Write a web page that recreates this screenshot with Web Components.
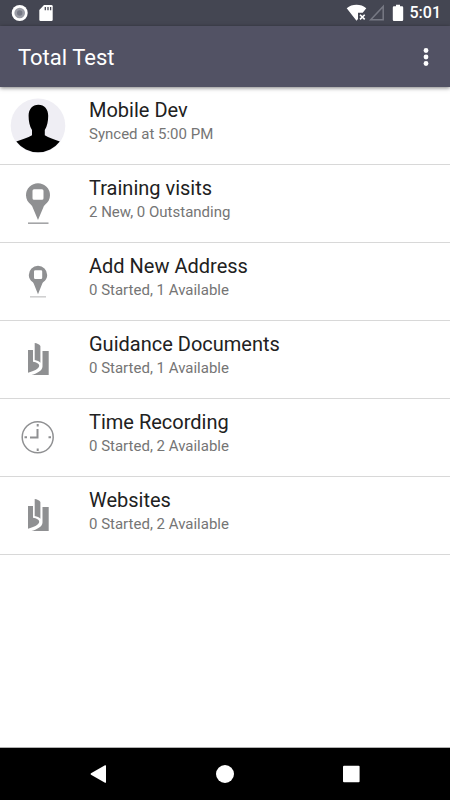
<!DOCTYPE html>
<html lang="en">
<head>
<meta charset="utf-8">
<meta name="viewport" content="width=device-width, initial-scale=1">
<title>Total Test</title>
<style>
    body {
        margin: 0;
        background: #fff;
        font-family: Roboto, sans-serif;
    }
</style>
</head>
<body>
<app-screen>
    <status-bar slot="top" time="5:01"></status-bar>
    <app-bar slot="top" titulo="Total Test"></app-bar>
    <menu-row titulo="Mobile Dev" detail="Synced at 5:00 PM" icon="avatar"></menu-row>
    <menu-row titulo="Training visits" detail="2 New, 0 Outstanding" icon="pin"></menu-row>
    <menu-row titulo="Add New Address" detail="0 Started, 1 Available" icon="smallPin"></menu-row>
    <menu-row titulo="Guidance Documents" detail="0 Started, 1 Available" icon="book"></menu-row>
    <menu-row titulo="Time Recording" detail="0 Started, 2 Available" icon="clock"></menu-row>
    <menu-row titulo="Websites" detail="0 Started, 2 Available" icon="book"></menu-row>
    <nav-bar slot="bottom"></nav-bar>
</app-screen>

<script>
const icons = {
    avatar: `
        <circle cx="38" cy="38.7" r="27.3" fill="#efeef4"/>
        <path fill="#000" d="M38.4 17.7c-6 0-9.800 4.600-9.800 11 0 5.500 1 10.300 3.400 14.300v5.300c-4 2.500-10 4-15.700 6.200a27.300 27.300 0 0 0 43.500 0c-5.500-2.200-11.200-3.800-15-6.200V43c2.400-4 3.400-8.800 3.400-14.300 0-6.400-3.800-11-9.800-11z"/>`,
    pin: `
        <path fill="#8f9092" fill-rule="evenodd" d="M38 18.300a12 12 0 0 1 12 12c0 4-2 7.200-5 9.400-1 1-1.200 1.500-1.600 2.500L38 55l-5.400-12.800c-.4-1-.6-1.500-1.600-2.500-3-2.200-5-5.400-5-9.400a12 12 0 0 1 12-12zM34 24.300q-1.500 0-1.500 1.500v7.400q0 1.500 1.500 1.500h8q1.500 0 1.500-1.500v-7.400q0-1.500-1.500-1.500z"/>
        <path stroke="#a4a5a7" stroke-width="1.600" d="M28 58.200h20.500"/>`,
    smallPin: `
        <path fill="#8f9092" fill-rule="evenodd" d="M38 22.700a9.200 9.200 0 0 1 9.200 9.200c0 3-1.500 5.500-3.800 7.200-.8.700-1 1.200-1.300 2L38 51.300l-4.100-10.200c-.3-.8-.5-1.300-1.300-2-2.300-1.700-3.800-4.200-3.800-7.200a9.200 9.200 0 0 1 9.200-9.200zM35.200 27.300q-1.200 0-1.200 1.200v6.200q0 1.200 1.200 1.200h5.800q1.200 0 1.200-1.200v-6.200q0-1.200-1.200-1.200z"/>
        <path stroke="#d0d0d1" stroke-width="1.600" d="M30 53.800h16"/>`,
    book: `
        <path fill="#8f9092" d="M28 29h5v11.700c3.600.6 6.200 1.900 6.200 4.100 0 3-5 5.300-11.200 6.900z"/>
        <path fill="#8f9092" d="M34.700 22c2.200.2 4.700 1.200 5.700 3v16.700c-1.200-1.300-3.200-2.200-5.700-2.700z"/>
        <path fill="#8f9092" d="M42.500 30h6.200v24H31.500c5-1.400 11-4.200 11-8.500z"/>`,
    clock: `
        <circle cx="37.700" cy="38.300" r="15.500" fill="none" stroke="#8f9092" stroke-width="1.500"/>
        <path fill="none" stroke="#8f9092" stroke-width="2" d="M37.500 30v8.500H30"/>
        <path stroke="#8f9092" stroke-width="2" d="M37.700 25v2.500M37.700 49.500V52M24.500 38.300H27M48.500 38.300H51"/>`
}

class AppScreen extends HTMLElement {
    constructor() {
        super()
        this.attachShadow({ mode: "open" })
    }

    connectedCallback() {
        this.shadowRoot.innerHTML = `
            <style>
                :host {
                    display: flex;
                    flex-direction: column;
                    min-height: 100vh;
                }
                main {
                    flex: 1;
                    border-bottom: 1px solid #b0b0b0;
                }
            </style>
            <slot name="top"></slot>
            <main><slot></slot></main>
            <slot name="bottom"></slot>
        `
    }
}

class StatusBar extends HTMLElement {
    constructor() {
        super()
        this.attachShadow({ mode: "open" })
    }

    connectedCallback() {
        this.shadowRoot.innerHTML = `
            <style>
                :host {
                    display: flex;
                    align-items: center;
                    justify-content: space-between;
                    height: 26px;
                    padding: 0 9px 0 11px;
                    background: #444652;
                    color: #fff;
                    font-size: 16px;
                    font-weight: 500;
                    line-height: 28px;
                }
                div {
                    display: flex;
                    align-items: center;
                }
                svg {
                    display: block;
                }
                .right {
                    gap: 6px;
                }
            </style>
            <div>
                <svg width="44" height="26" viewBox="0 0 44 26">
                    <circle cx="8.700" cy="13" r="8" fill="#fff"/>
                    <circle cx="8.700" cy="13" r="5.300" fill="#9a9ca5"/>
                    <circle cx="8.700" cy="13" r="2.700" fill="#767985"/>
                    <path fill="#fff" d="M33 5h7.500q1.200 0 1.200 1.200v13.600q0 1.200-1.200 1.200h-11q-1.200 0-1.200-1.200V10z"/>
                    <path stroke="#444652" stroke-width="1.300" d="M34.300 7v3.300M37 7v3.300M39.600 7v3.300"/>
                </svg>
            </div>
            <div class="right">
                <svg width="58" height="26" viewBox="346 0 58 26">
                    <path fill="#fff" d="M346.700 8.300C352 3.700 361 3.700 366.300 8.300L362.700 12.700H358V19L356.500 20.700z"/>
                    <path stroke="#fff" stroke-width="1.600" d="M360 14.700l4.700 4.700M364.700 14.700l-4.700 4.700"/>
                    <path fill="none" stroke="#777984" stroke-width="1.500" d="M383.200 6.500v13.300h-12.500z"/>
                    <path fill="#fff" d="M396 4.700h4v1.600h2q1.200 0 1.200 1.200v12.300q0 1.200-1.200 1.200h-8q-1.200 0-1.200-1.200V7.500q0-1.200 1.200-1.200h2z"/>
                </svg>
                <time>${this.getAttribute("time")}</time>
            </div>
        `
    }
}

class AppBar extends HTMLElement {
    constructor() {
        super()
        this.attachShadow({ mode: "open" })
    }

    connectedCallback() {
        this.shadowRoot.innerHTML = `
            <style>
                :host {
                    display: flex;
                    align-items: center;
                    justify-content: space-between;
                    height: 61px;
                    padding: 0 12px 0 18px;
                    box-sizing: border-box;
                    background: #525264;
                    color: #fff;
                    box-shadow: 0 1px 4px rgba(0, 0, 0, .5);
                    z-index: 1;
                }
                h1 {
                    margin: 0;
                    padding-top: 2px;
                    font-size: 22px;
                    font-weight: 400;
                    line-height: 28px;
                }
                button {
                    padding: 0;
                    border: 0;
                    background: none;
                }
                svg {
                    display: block;
                }
            </style>
            <h1>${this.getAttribute("titulo")}</h1>
            <button aria-label="More options">
                <svg width="24" height="24" viewBox="0 0 24 24" fill="#fff">
                    <circle cx="12" cy="5.500" r="2.400"/>
                    <circle cx="12" cy="12" r="2.400"/>
                    <circle cx="12" cy="18.500" r="2.400"/>
                </svg>
            </button>
        `
    }
}

class MenuRow extends HTMLElement {
    constructor() {
        super()
        this.attachShadow({ mode: "open" })
    }

    connectedCallback() {
        this.shadowRoot.innerHTML = `
            <style>
                :host {
                    display: block;
                    border-bottom: 1px solid #d8d8d8;
                }
                button {
                    display: flex;
                    gap: 13px;
                    width: 100%;
                    padding: 0;
                    border: 0;
                    background: none;
                    font: inherit;
                    text-align: left;
                }
                svg {
                    display: block;
                    flex: none;
                }
                .text {
                    display: flex;
                    flex-direction: column;
                    padding-top: 11px;
                }
                .title {
                    color: #212121;
                    font-size: 20px;
                    line-height: 25px;
                }
                .detail {
                    color: #757575;
                    font-size: 15px;
                    line-height: 22px;
                }
            </style>
            <button>
                <svg width="76" height="77" viewBox="0 0 76 77">${icons[this.getAttribute("icon")]}</svg>
                <span class="text">
                    <span class="title">${this.getAttribute("titulo")}</span>
                    <span class="detail">${this.getAttribute("detail")}</span>
                </span>
            </button>
        `
    }
}

class NavBar extends HTMLElement {
    constructor() {
        super()
        this.attachShadow({ mode: "open" })
    }

    connectedCallback() {
        this.shadowRoot.innerHTML = `
            <style>
                :host {
                    display: flex;
                    align-items: center;
                    justify-content: center;
                    gap: 102px;
                    height: 52px;
                    background: #000;
                }
                button {
                    padding: 0;
                    border: 0;
                    background: none;
                }
                svg {
                    display: block;
                }
            </style>
            <button aria-label="Back">
                <svg width="24" height="24" viewBox="0 0 24 24" fill="#fff"><path d="M19 3.800v16.400q0 1-1 .5L4 12.700q-1-.7 0-1.400L18 3.300q1-.5 1 .5z"/></svg>
            </button>
            <button aria-label="Home">
                <svg width="24" height="24" viewBox="0 0 24 24" fill="#fff"><circle cx="12" cy="12" r="9"/></svg>
            </button>
            <button aria-label="Recent apps">
                <svg width="24" height="24" viewBox="0 0 24 24" fill="#fff"><rect x="4" y="3.700" width="16.600" height="16.600" rx="1"/></svg>
            </button>
        `
    }
}

customElements.define("app-screen", AppScreen)
customElements.define("status-bar", StatusBar)
customElements.define("app-bar", AppBar)
customElements.define("menu-row", MenuRow)
customElements.define("nav-bar", NavBar)
</script>
</body>
</html>
